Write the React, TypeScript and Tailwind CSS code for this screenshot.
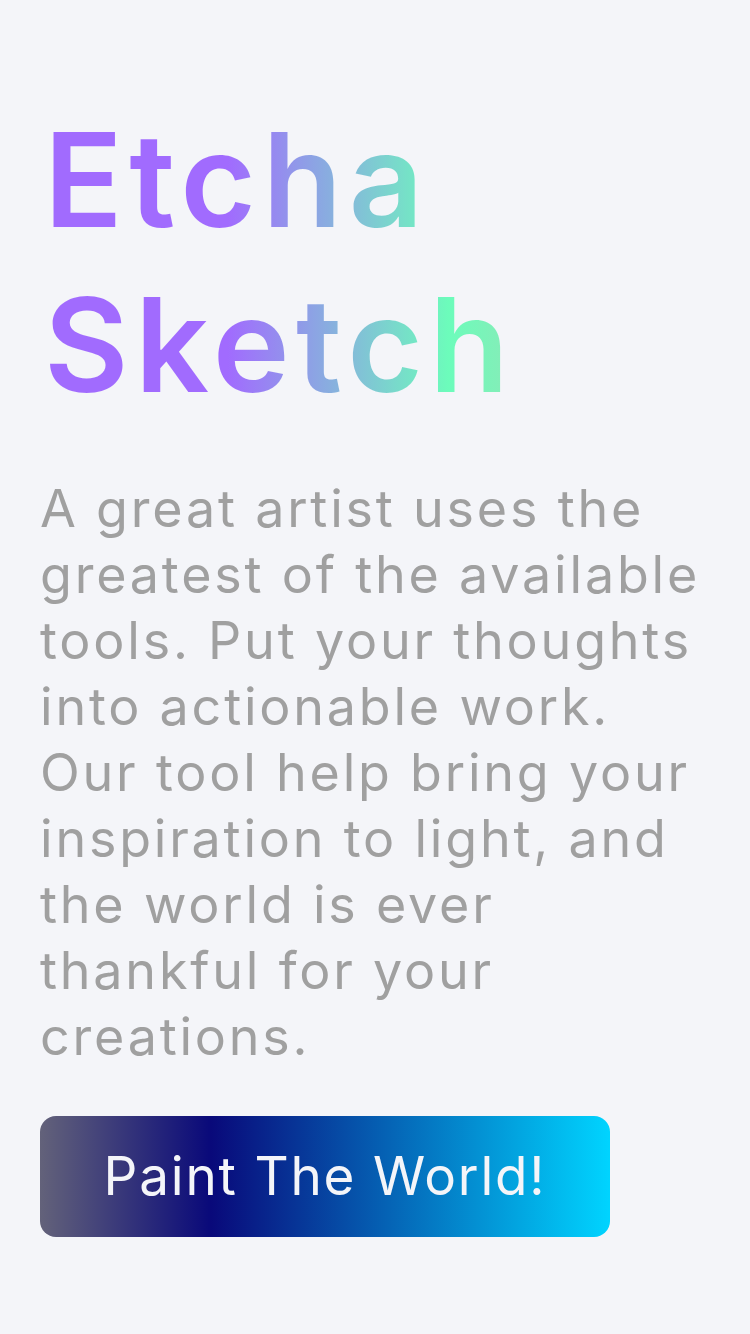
import React from "react";

export default function App() {
  const lines = [
    "A great artist uses the",
    "greatest of the available",
    "tools. Put your thoughts",
    "into actionable work.",
    "Our tool help bring your",
    "inspiration to light, and",
    "the world is ever",
    "thankful for your",
    "creations.",
  ];
  return (
    <div
      className="min-h-[1334px] w-full bg-[#f4f5f9] px-10 pt-[97px]"
      style={{ fontFamily: "Inter, 'Open Sans', sans-serif" }}
    >
      <h1 className="w-[670px] bg-[linear-gradient(90deg,#a16bfe_28%,#6cfcbb_61%,#8be9b7_72%,#9ee2b8_100%)] bg-clip-text pl-[4px] text-[130px] font-semibold leading-[165px] tracking-[6.5px] text-transparent">
        Etcha
        <br />
        Sketch
      </h1>
      <p className="mt-[49px] text-[52px] leading-[66px] tracking-[2.8px] text-[#a0a0a0]">
        {lines.map((l, i) => (
          <span key={i} className="block whitespace-nowrap">
            {l}
          </span>
        ))}
      </p>
      <button className="mt-[46px] flex h-[121px] w-[570px] items-center justify-center rounded-2xl bg-[linear-gradient(90deg,#63627a_0%,#09097a_30%,#00d4ff_100%)] text-[53px] tracking-[1.8px] text-[#f4f5f9]">
        Paint The World!
      </button>
    </div>
  );
}
